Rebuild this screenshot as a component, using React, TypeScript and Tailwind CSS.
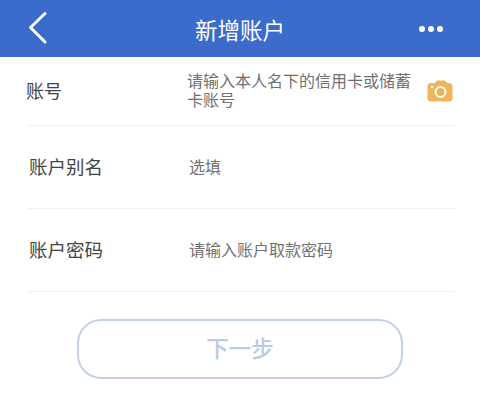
export default function App() {
  return (
    <div className="w-[480px] h-[410px] bg-white flex flex-col overflow-hidden font-['Noto_Sans_CJK_SC','Liberation_Sans',sans-serif]">
      <header className="h-[57px] shrink-0 bg-[#3b6bcb] flex items-center justify-between pl-[27px] pr-[37px] text-white">
        <svg width="22" height="34" viewBox="0 0 22 34" fill="none" stroke="white" strokeWidth="3" strokeLinecap="round" strokeLinejoin="round" className="mt-[-1px]">
          <path d="M18 2.5 L3.5 16.5 L18 31" />
        </svg>
        <h1 className="text-[22.5px] font-normal leading-none text-white mr-[-12px] mt-[1px]">新增账户</h1>
        <div className="flex gap-[3px]">
          <span className="w-[6px] h-[6px] rounded-full bg-white" />
          <span className="w-[6px] h-[6px] rounded-full bg-white" />
          <span className="w-[6px] h-[6px] rounded-full bg-white" />
        </div>
      </header>
      <div className="h-[69px] ml-[27px] mr-[26px] border-b border-[#f0f0f0] flex items-center">
        <span className="w-[160px] text-[18px] text-[#444444] leading-none shrink-0 mt-[-3px] ml-[-1px] mr-[1px]">账号</span>
        <p className="w-[226px] text-[16px] leading-[19px] text-[#707070] mt-[-2px]">请输入本人名下的信用卡或储蓄卡账号</p>
        <svg width="26" height="22" viewBox="0 0 26 22" className="ml-[14px] shrink-0">
          <path fill="#edb557" d="M4 3 H8 L10 0.5 H18 L20 3 H22 a3.5 3.5 0 0 1 3.5 3.5 V18 a3.5 3.5 0 0 1 -3.5 3.5 H4 A3.5 3.5 0 0 1 0.5 18 V6.5 A3.5 3.5 0 0 1 4 3 Z" />
          <circle cx="13.5" cy="12" r="5" fill="none" stroke="white" strokeWidth="2" />
          <circle cx="5" cy="7" r="1.2" fill="white" />
        </svg>
      </div>
      <div className="h-[83px] ml-[27px] mr-[26px] border-b border-[#f0f0f0] flex items-center">
        <span className="w-[162px] pl-[2px] text-[18.5px] text-[#444444] leading-none shrink-0 mt-[-2px]">账户别名</span>
        <span className="text-[16px] text-[#707070] leading-none mt-[-2px]">选填</span>
      </div>
      <div className="h-[83px] ml-[27px] mr-[26px] border-b border-[#f0f0f0] flex items-center">
        <span className="w-[162px] pl-[2px] text-[18.5px] text-[#444444] leading-none shrink-0 mt-[-2px]">账户密码</span>
        <span className="text-[16px] text-[#707070] leading-none mt-[-2px]">请输入账户取款密码</span>
      </div>
      <div className="pt-[27px] pl-[77px]">
        <button className="w-[326px] h-[60px] rounded-[24px] border-2 border-[#c3d2e9] bg-white text-[22.5px] font-medium text-[#b9cbe6] flex items-center justify-center pb-[3px]">下一步</button>
      </div>
    </div>
  );
}
